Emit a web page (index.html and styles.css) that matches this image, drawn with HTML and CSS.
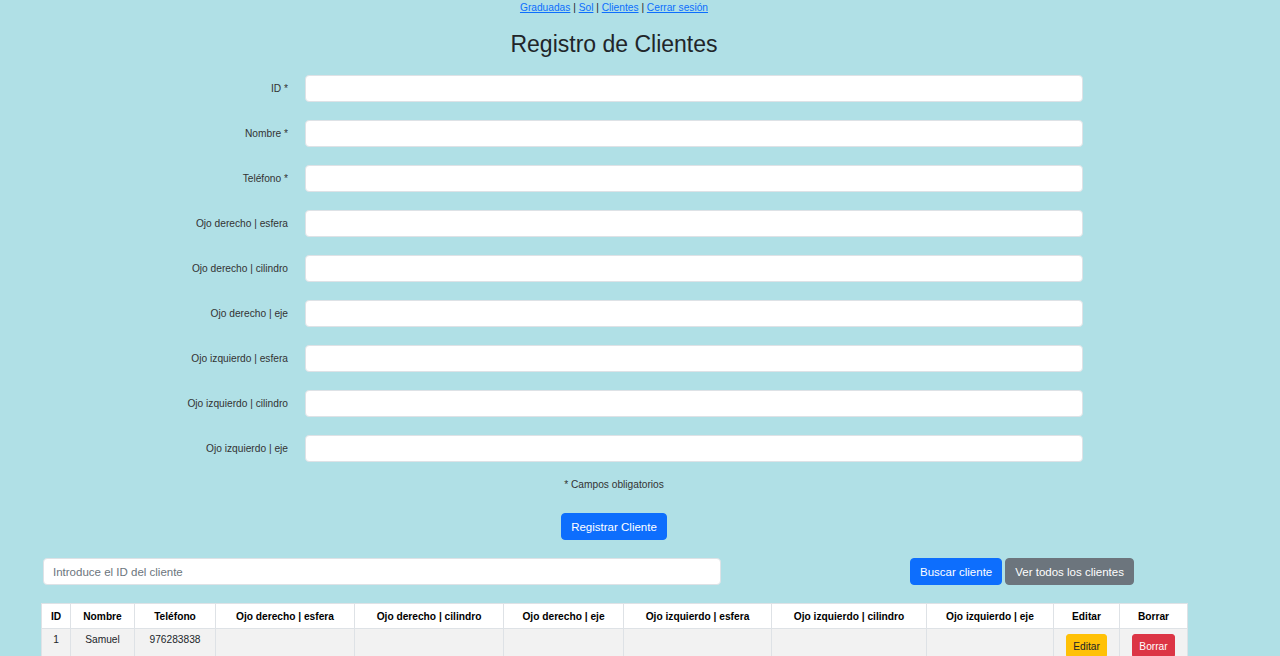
FILE: index.html
```html
<!DOCTYPE html>
<html lang="es">
<head>
<meta charset="utf-8">
<title>Registro de Clientes</title>
<link rel="stylesheet" href="styles.css">
</head>
<body>
<div class="wrap">
  <nav class="nav">
    <a href="#">Graduadas</a> | <a href="#">Sol</a> | <a href="#">Clientes</a> | <a href="#">Cerrar sesión</a>
  </nav>
  <h1 class="title">Registro de Clientes</h1>
  <form class="form">
    <label class="lbl">ID *</label><input class="inp" type="text">
    <label class="lbl">Nombre *</label><input class="inp" type="text">
    <label class="lbl">Teléfono *</label><input class="inp" type="text">
    <label class="lbl">Ojo derecho | esfera</label><input class="inp" type="text">
    <label class="lbl">Ojo derecho | cilindro</label><input class="inp" type="text">
    <label class="lbl">Ojo derecho | eje</label><input class="inp" type="text">
    <label class="lbl">Ojo izquierdo | esfera</label><input class="inp" type="text">
    <label class="lbl">Ojo izquierdo | cilindro</label><input class="inp" type="text">
    <label class="lbl">Ojo izquierdo | eje</label><input class="inp" type="text">
  </form>
  <p class="note">* Campos obligatorios</p>
  <div class="center"><button class="btn btn-primary">Registrar Cliente</button></div>
  <div class="search">
    <input class="inp search-inp" type="text" placeholder="Introduce el ID del cliente">
    <div class="search-btns">
      <button class="btn btn-primary">Buscar cliente</button>
      <button class="btn btn-secondary">Ver todos los clientes</button>
    </div>
  </div>
  <table class="tbl">
    <colgroup>
      <col style="width:29px"><col style="width:64px"><col style="width:81px"><col style="width:139px"><col style="width:149px"><col style="width:120px"><col style="width:148px"><col style="width:155px"><col style="width:127px"><col style="width:66px"><col style="width:68px">
    </colgroup>
    <thead>
      <tr>
        <th>ID</th><th>Nombre</th><th>Teléfono</th><th>Ojo derecho | esfera</th><th>Ojo derecho | cilindro</th><th>Ojo derecho | eje</th><th>Ojo izquierdo | esfera</th><th>Ojo izquierdo | cilindro</th><th>Ojo izquierdo | eje</th><th>Editar</th><th>Borrar</th>
      </tr>
    </thead>
    <tbody>
      <tr>
        <td>1</td><td>Samuel</td><td>976283838</td><td></td><td></td><td></td><td></td><td></td><td></td>
        <td><button class="btn btn-sm btn-warning">Editar</button></td>
        <td><button class="btn btn-sm btn-danger">Borrar</button></td>
      </tr>
    </tbody>
  </table>
</div>
</body>
</html>
```
FILE: styles.css
```css
* { box-sizing: border-box; }
html, body { margin: 0; padding: 0; }
body {
  background: #b0e0e6;
  font-family: "Liberation Sans", Arial, sans-serif;
  color: #212529;
  overflow: hidden;
}
.wrap {
  width: 1146px;
  margin-left: 41px;
}
.nav {
  text-align: center;
  font-size: 10.2px;
  line-height: 13px;
  color: #212529;
  padding-top: 1px;
}
.nav a { color: #0d6efd; text-decoration: underline; }
.title {
  text-align: center;
  font-size: 23px;
  font-weight: 400;
  line-height: 29px;
  margin: 16px 0 16px;
}
.form {
  display: grid;
  grid-template-columns: 247px 778px;
  column-gap: 17px;
  row-gap: 18px;
  align-items: center;
}
.lbl {
  text-align: right;
  font-size: 10.2px;
  color: #333;
}
.inp {
  height: 27px;
  border: 1px solid #dee2e6;
  border-radius: 4px;
  background: #fff;
  padding: 0 9px;
  font-family: inherit;
  font-size: 11.5px;
  outline: none;
}
.note {
  text-align: center;
  font-size: 10.2px;
  color: #333;
  margin: 16px 0 0;
  line-height: 13px;
}
.center { text-align: center; margin-top: 22px; }
.btn {
  font-family: inherit;
  font-size: 11.5px;
  height: 27px;
  padding: 0 9px;
  border: 1px solid transparent;
  border-radius: 4px;
  color: #fff;
  cursor: pointer;
}
.btn-primary { background: #0d6efd; border-color: #0d6efd; }
.btn-secondary { background: #6c757d; border-color: #6c757d; }
.btn-warning { background: #ffc107; border-color: #ffc107; color: #212529; }
.btn-danger { background: #dc3545; border-color: #dc3545; }
.btn-sm { height: 24px; padding: 0 6px; font-size: 10.2px; border-radius: 3px; }
.search {
  display: flex;
  align-items: center;
  margin-top: 18px;
  padding-left: 2px;
}
.search-inp { width: 678px; color: #212529; }
.search-inp::placeholder { color: #6c757d; }
.search-btns {
  display: flex;
  gap: 3px;
  margin-left: 189px;
}
.tbl {
  margin-top: 18px;
  width: 1146px;
  table-layout: fixed;
  border-collapse: collapse;
  font-size: 10.2px;
}
.tbl th, .tbl td {
  border: 1px solid #dee2e6;
  text-align: center;
}
.tbl th {
  background: #fff;
  font-weight: 700;
  height: 25px;
  padding: 0 4px;
  color: #000;
}
.tbl td {
  background: #f2f2f2;
  height: 30px;
  padding: 5px 4px;
  vertical-align: top;
  color: #212529;
}
```
